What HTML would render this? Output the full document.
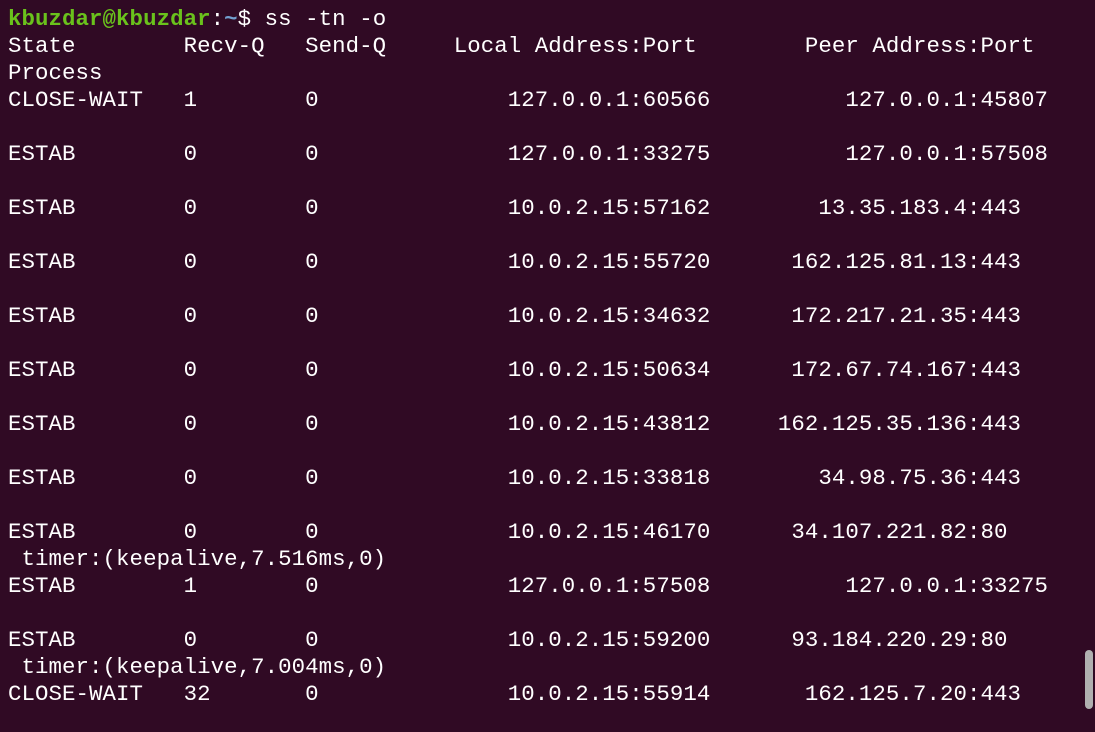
<!DOCTYPE html>
<html><head><meta charset="utf-8"><style>
html,body{margin:0;padding:0;width:1095px;height:732px;overflow:hidden;background:#300a24;}
pre{position:absolute;left:8px;top:6px;margin:0;font-family:"Liberation Mono",monospace;font-size:22.4px;letter-spacing:0.07px;line-height:27px;color:#ffffff;white-space:pre;}
.g{color:#6ac21c;font-weight:bold}.b{color:#729fcf;font-weight:bold}
.sb{position:absolute;left:1085px;top:650px;width:8px;height:59px;border-radius:4px;background:#b0b0b0;}
</style></head><body>
<pre><span class="g">kbuzdar@kbuzdar</span>:<span class="b">~</span>$ ss -tn -o
State        Recv-Q   Send-Q     Local Address:Port        Peer Address:Port
Process
CLOSE-WAIT   1        0              127.0.0.1:60566          127.0.0.1:45807

ESTAB        0        0              127.0.0.1:33275          127.0.0.1:57508

ESTAB        0        0              10.0.2.15:57162        13.35.183.4:443

ESTAB        0        0              10.0.2.15:55720      162.125.81.13:443

ESTAB        0        0              10.0.2.15:34632      172.217.21.35:443

ESTAB        0        0              10.0.2.15:50634      172.67.74.167:443

ESTAB        0        0              10.0.2.15:43812     162.125.35.136:443

ESTAB        0        0              10.0.2.15:33818        34.98.75.36:443

ESTAB        0        0              10.0.2.15:46170      34.107.221.82:80
 timer:(keepalive,7.516ms,0)
ESTAB        1        0              127.0.0.1:57508          127.0.0.1:33275

ESTAB        0        0              10.0.2.15:59200      93.184.220.29:80
 timer:(keepalive,7.004ms,0)
CLOSE-WAIT   32       0              10.0.2.15:55914       162.125.7.20:443</pre>
<div class="sb"></div>
</body></html>
